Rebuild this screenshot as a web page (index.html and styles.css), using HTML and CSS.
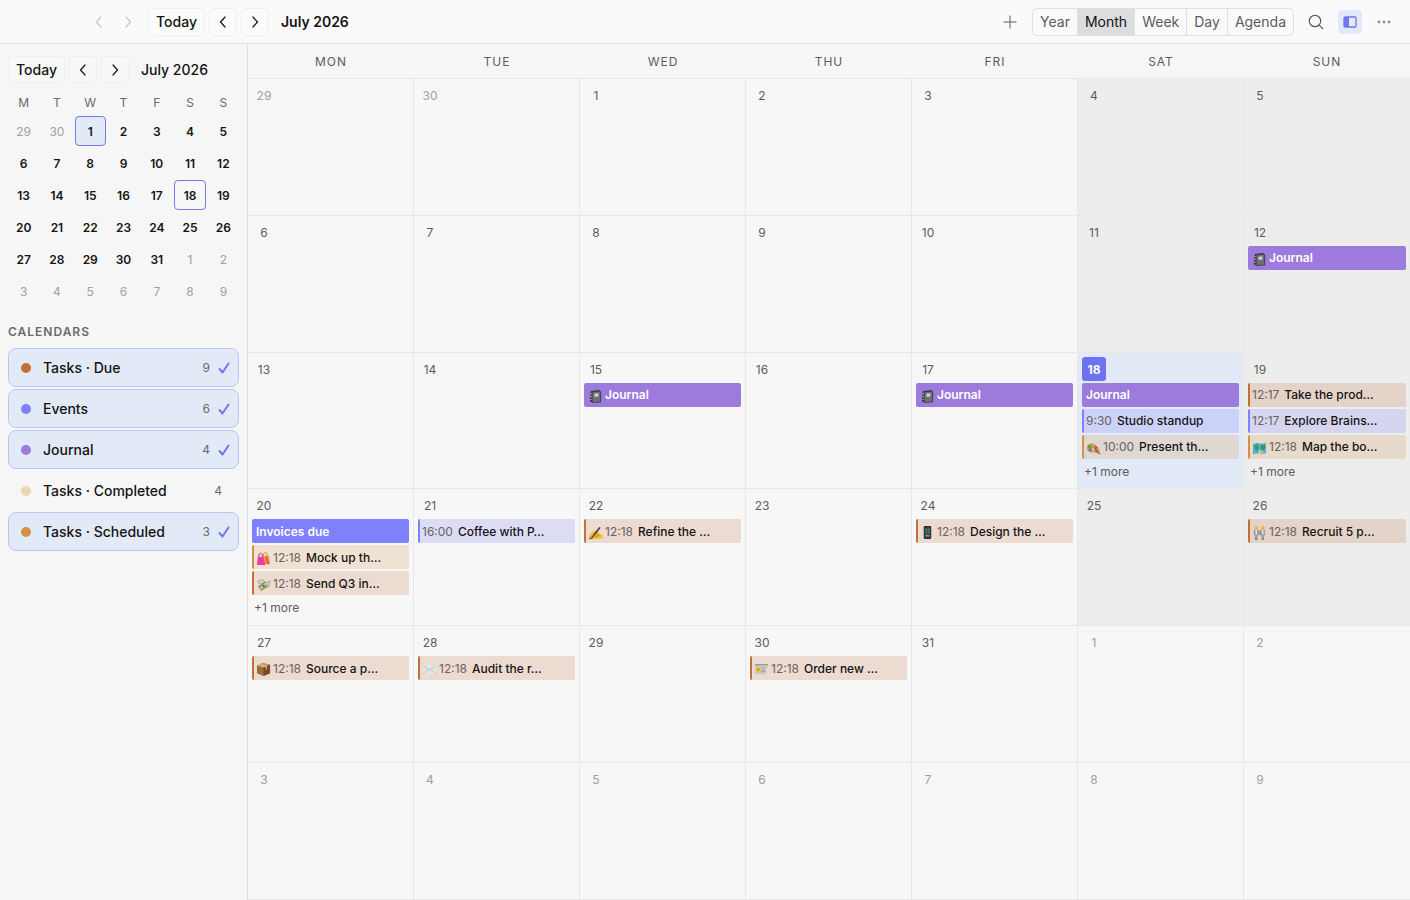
FILE: index.html
```html
<!DOCTYPE html>
<html lang="en">
<head>
    <meta charset="UTF-8">
    <meta name="viewport" content="width=device-width, initial-scale=1.0">
    <title>Calendar</title>
    <link rel="stylesheet" href="styles.css">
</head>
<body>

    <!-- Shared icons -->
    <svg class="sprite" aria-hidden="true">
        <symbol id="left" viewBox="0 0 16 16"><path d="M10 3L5.500 8l4.500 5" fill="none" stroke="currentColor" stroke-width="1.200" stroke-linecap="round" stroke-linejoin="round"/></symbol>
        <symbol id="right" viewBox="0 0 16 16"><path d="M6 3l4.500 5L6 13" fill="none" stroke="currentColor" stroke-width="1.200" stroke-linecap="round" stroke-linejoin="round"/></symbol>
        <symbol id="notebook" viewBox="0 0 16 16">
            <path d="M3 2l9-1 2 2v11l-9 1-3-2z" fill="#3c3c42"/><path d="M5 3.500l8-.8v10.600l-8 .8z" fill="#6e6e74"/><path d="M7 5l4-.5v3.500L7 8.500z" fill="#cfcfd2"/><path d="M2.500 5h2M2.500 8h2M2.500 11h2" stroke="#a9a9ad"/>
        </symbol>
        <symbol id="palette" viewBox="0 0 16 16">
            <path d="M1 7c0-4 5-6 9-3s6 8 3 9-3-2-6-1-6-1-6-5z" fill="#cf9450"/><circle cx="3.800" cy="6" r="1.700" fill="#3fa35a"/><circle cx="7.500" cy="4.800" r="1.500" fill="#8fc04a"/><circle cx="10.500" cy="7" r="1.500" fill="#d8433b"/><circle cx="4.300" cy="9.500" r="1.400" fill="#5a6fc0"/><circle cx="8" cy="9" r="1.200" fill="#f0e3c8"/><path d="M9 8l6 6" stroke="#7b5a3c" stroke-width="1.200"/>
        </symbol>
        <symbol id="map" viewBox="0 0 16 16">
            <path d="M1 3l5-1 4 1 5-1v11l-5 1-4-1-5 1z" fill="#4eb4d4"/><path d="M2 5l3-1 2 2-1 3-2 1-1-3zM9 5l5-1v4l-2 2-2-2z" fill="#4c8f55"/><path d="M7 10l4 0 1 3-2 1-3-1z" fill="#e5d889"/><path d="M6 2v11M10 3v11" stroke="#2b7795" stroke-width=".5"/>
        </symbol>
        <symbol id="bags" viewBox="0 0 16 16">
            <path d="M8 5V3q2-3 4 0v2" fill="none" stroke="#c98b2f"/><path d="M7 5h7l1 9H7z" fill="#f0a33c"/><path d="M3 6V4q2-3 4 0v2" fill="none" stroke="#b01f7c"/><path d="M2 6h6l2 9H1z" fill="#f03ca8"/><path d="M11 6l2 8" stroke="#e5486d" stroke-width="2"/>
        </symbol>
        <symbol id="money" viewBox="0 0 16 16">
            <path d="M2 4l5-1 4 3-2 2-6-1zM9 7l6-3-1 6-4 2z" fill="#cdd0c8" stroke="#8b9085" stroke-width=".6"/><path d="M2 10l7-5 4 4-7 6z" fill="#7f956a"/><path d="M4 11l6-5 2 2-6 5z" fill="#d8c682"/><circle cx="8" cy="9.500" r="1.500" fill="#697d53"/>
        </symbol>
        <symbol id="writing" viewBox="0 0 16 16">
            <path d="M1 12l3-4 4-2.500L10 6l2 1.500-1 1.500 4.500 1.500v3.500L8 15l-6-1z" fill="#f8ba2e"/><path d="M3 13.500L12 2l1.500 1L5.500 13z" fill="#3c3c40"/><path d="M6 11l4-1 2 1-4 2" fill="none" stroke="#c57e12" stroke-width=".9"/><path d="M1 14.500h4" stroke="#555"/>
        </symbol>
        <symbol id="phone" viewBox="0 0 16 16">
            <rect x="4" y="1" width="8" height="14" rx="1.300" fill="#25292b"/><rect x="5" y="2.500" width="6" height="11" fill="#39534f"/><path d="M6 4h1v1H6zM9 4h1v1H9zM6 7h1v1H6zM9 7h1v1H9zM6 11h4v1H6z" fill="#93aaa2"/>
        </symbol>
        <symbol id="people" viewBox="0 0 16 16">
            <circle cx="4.500" cy="3" r="2" fill="#f0b52e"/><circle cx="11.500" cy="3" r="2" fill="#f0b52e"/><path d="M2 5h5l1 2 1-2h5v6h-1l-.5 4h-2L10 11H6l-.5 4h-2L3 11H2z" fill="#9c9c9c"/><path d="M4.500 5v5M11.500 5v5" stroke="#f3efe9" stroke-width="1.400"/><path d="M3 15h3M10 15h3" stroke="#555"/>
        </symbol>
        <symbol id="package" viewBox="0 0 16 16">
            <path d="M1 4l6-3 8 2v9l-7 3-7-3z" fill="#9c6b3c"/><path d="M1 4l6-3 8 2-7 3z" fill="#cb9c68"/><path d="M8 6l7-3v9l-7 3z" fill="#75492a"/><path d="M4 3l7 2v3" fill="none" stroke="#e0bb85" stroke-width="1.300"/>
        </symbol>
        <symbol id="envelope" viewBox="0 0 16 16">
            <path d="M1 3h14v10H1z" fill="#e3e5e7"/><path d="M1 3l7 6 7-6M1 13l5-5M15 13l-5-5" fill="none" stroke="#b3b8bd" stroke-width=".8"/>
        </symbol>
        <symbol id="card" viewBox="0 0 16 16">
            <path d="M1 2h14v4l-2 1v6H1z" fill="#c8c8c8"/><path d="M1 2h14v1.500H1z" fill="#999"/><path d="M2 6h5v5H2z" fill="#efc13f"/><path d="M8 6h3v1H8zM8 9h4v1H8z" fill="#87878a"/><circle cx="4.500" cy="8" r="1" fill="#b98020"/>
        </symbol>
    </svg>

    <!-- Top bar -->
    <header class="topbar">
        <nav class="history">
            <button class="ghost faded" aria-label="Back"><svg><use href="#left"/></svg></button>
            <button class="ghost faded" aria-label="Forward"><svg><use href="#right"/></svg></button>
        </nav>
        <div class="period">
            <button class="btn">Today</button>
            <button class="btn arrow" aria-label="Previous month"><svg><use href="#left"/></svg></button>
            <button class="btn arrow" aria-label="Next month"><svg><use href="#right"/></svg></button>
            <h1>July 2026</h1>
        </div>
        <div class="tools">
            <button class="ghost" aria-label="New event"><svg viewBox="0 0 16 16"><path d="M8 1.500v13M1.500 8h13" stroke="currentColor"/></svg></button>
            <div class="views">
                <button>Year</button>
                <button class="active">Month</button>
                <button>Week</button>
                <button>Day</button>
                <button>Agenda</button>
            </div>
            <button class="ghost" aria-label="Search"><svg viewBox="0 0 16 16"><circle cx="7" cy="7" r="5.700" fill="none" stroke="currentColor" stroke-width="1.200"/><path d="M11.200 11.200L15 15" stroke="currentColor" stroke-width="1.200"/></svg></button>
            <button class="ghost on" aria-label="Toggle sidebar"><svg viewBox="0 0 16 16"><rect x="2" y="3" width="12" height="10" rx="1" fill="none" stroke="currentColor" stroke-width="1.300"/><path d="M2 3h5v10H2z" fill="currentColor"/></svg></button>
            <button class="ghost dots" aria-label="More"><svg viewBox="0 0 16 16"><g fill="currentColor"><circle cx="3" cy="8" r="1.400"/><circle cx="8" cy="8" r="1.400"/><circle cx="13" cy="8" r="1.400"/></g></svg></button>
        </div>
    </header>

    <div class="layout">

        <!-- Sidebar -->
        <aside class="sidebar">
            <div class="period small">
                <button class="btn">Today</button>
                <button class="btn arrow" aria-label="Previous month"><svg><use href="#left"/></svg></button>
                <button class="btn arrow" aria-label="Next month"><svg><use href="#right"/></svg></button>
                <h2>July 2026</h2>
            </div>

            <div class="mini mini-head">
                <span>M</span><span>T</span><span>W</span><span>T</span><span>F</span><span>S</span><span>S</span>
            </div>
            <div class="mini">
                <button class="out">29</button><button class="out">30</button><button class="selected">1</button><button>2</button><button>3</button><button>4</button><button>5</button>
                <button>6</button><button>7</button><button>8</button><button>9</button><button>10</button><button>11</button><button>12</button>
                <button>13</button><button>14</button><button>15</button><button>16</button><button>17</button><button class="now">18</button><button>19</button>
                <button>20</button><button>21</button><button>22</button><button>23</button><button>24</button><button>25</button><button>26</button>
                <button>27</button><button>28</button><button>29</button><button>30</button><button>31</button><button class="out">1</button><button class="out">2</button>
                <button class="out">3</button><button class="out">4</button><button class="out">5</button><button class="out">6</button><button class="out">7</button><button class="out">8</button><button class="out">9</button>
            </div>

            <h3>CALENDARS</h3>
            <div class="calendars">
                <label class="calendar checked"><span class="dot due"></span><span class="name">Tasks · Due</span><span class="count">9</span><input type="checkbox" checked></label>
                <label class="calendar checked"><span class="dot events"></span><span class="name">Events</span><span class="count">6</span><input type="checkbox" checked></label>
                <label class="calendar checked"><span class="dot journal"></span><span class="name">Journal</span><span class="count">4</span><input type="checkbox" checked></label>
                <label class="calendar"><span class="dot completed"></span><span class="name">Tasks · Completed</span><span class="count">4</span><input type="checkbox"></label>
                <label class="calendar checked"><span class="dot scheduled"></span><span class="name">Tasks · Scheduled</span><span class="count">3</span><input type="checkbox" checked></label>
            </div>
        </aside>

        <!-- Month grid -->
        <main class="month">
            <div class="weekdays">
                <span>MON</span><span>TUE</span><span>WED</span><span>THU</span><span>FRI</span><span>SAT</span><span>SUN</span>
            </div>
            <div class="days">
                <div class="day out"><span class="num">29</span></div>
                <div class="day out"><span class="num">30</span></div>
                <div class="day"><span class="num">1</span></div>
                <div class="day"><span class="num">2</span></div>
                <div class="day"><span class="num">3</span></div>
                <div class="day weekend"><span class="num">4</span></div>
                <div class="day weekend"><span class="num">5</span></div>

                <div class="day"><span class="num">6</span></div>
                <div class="day"><span class="num">7</span></div>
                <div class="day"><span class="num">8</span></div>
                <div class="day"><span class="num">9</span></div>
                <div class="day"><span class="num">10</span></div>
                <div class="day weekend"><span class="num">11</span></div>
                <div class="day weekend"><span class="num">12</span>
                    <button class="event solid journal"><svg><use href="#notebook"/></svg><b>Journal</b></button>
                </div>

                <div class="day"><span class="num">13</span></div>
                <div class="day"><span class="num">14</span></div>
                <div class="day"><span class="num">15</span>
                    <button class="event solid journal"><svg><use href="#notebook"/></svg><b>Journal</b></button>
                </div>
                <div class="day"><span class="num">16</span></div>
                <div class="day"><span class="num">17</span>
                    <button class="event solid journal"><svg><use href="#notebook"/></svg><b>Journal</b></button>
                </div>
                <div class="day today"><span class="num">18</span>
                    <button class="event solid journal"><b>Journal</b></button>
                    <button class="event tint-events"><time>9:30</time><b>Studio standup</b></button>
                    <button class="event tint-scheduled"><svg><use href="#palette"/></svg><time>10:00</time><b>Present th…</b></button>
                    <button class="more">+1 more</button>
                </div>
                <div class="day weekend"><span class="num">19</span>
                    <button class="event tint-due"><time>12:17</time><b>Take the prod…</b></button>
                    <button class="event tint-events"><time>12:17</time><b>Explore Brains…</b></button>
                    <button class="event tint-scheduled"><svg><use href="#map"/></svg><time>12:18</time><b>Map the bo…</b></button>
                    <button class="more">+1 more</button>
                </div>

                <div class="day"><span class="num">20</span>
                    <button class="event solid events"><b>Invoices due</b></button>
                    <button class="event tint-scheduled"><svg><use href="#bags"/></svg><time>12:18</time><b>Mock up th…</b></button>
                    <button class="event tint-due"><svg><use href="#money"/></svg><time>12:18</time><b>Send Q3 in…</b></button>
                    <button class="more">+1 more</button>
                </div>
                <div class="day"><span class="num">21</span>
                    <button class="event tint-events"><time>16:00</time><b>Coffee with P…</b></button>
                </div>
                <div class="day"><span class="num">22</span>
                    <button class="event tint-due"><svg><use href="#writing"/></svg><time>12:18</time><b>Refine the …</b></button>
                </div>
                <div class="day"><span class="num">23</span></div>
                <div class="day"><span class="num">24</span>
                    <button class="event tint-due"><svg><use href="#phone"/></svg><time>12:18</time><b>Design the …</b></button>
                </div>
                <div class="day weekend"><span class="num">25</span></div>
                <div class="day weekend"><span class="num">26</span>
                    <button class="event tint-due"><svg><use href="#people"/></svg><time>12:18</time><b>Recruit 5 p…</b></button>
                </div>

                <div class="day"><span class="num">27</span>
                    <button class="event tint-due"><svg><use href="#package"/></svg><time>12:18</time><b>Source a p…</b></button>
                </div>
                <div class="day"><span class="num">28</span>
                    <button class="event tint-due"><svg><use href="#envelope"/></svg><time>12:18</time><b>Audit the r…</b></button>
                </div>
                <div class="day"><span class="num">29</span></div>
                <div class="day"><span class="num">30</span>
                    <button class="event tint-due"><svg><use href="#card"/></svg><time>12:18</time><b>Order new …</b></button>
                </div>
                <div class="day"><span class="num">31</span></div>
                <div class="day out"><span class="num">1</span></div>
                <div class="day out"><span class="num">2</span></div>

                <div class="day out"><span class="num">3</span></div>
                <div class="day out"><span class="num">4</span></div>
                <div class="day out"><span class="num">5</span></div>
                <div class="day out"><span class="num">6</span></div>
                <div class="day out"><span class="num">7</span></div>
                <div class="day out"><span class="num">8</span></div>
                <div class="day out"><span class="num">9</span></div>
            </div>
        </main>

    </div>

</body>
</html>
```
FILE: styles.css
```css
* {
    margin: 0;
    padding: 0;
    box-sizing: border-box;
}

body {
    display: flex;
    flex-direction: column;
    min-height: 100vh;
    background: #f6f6f6;
    color: #141414;
    font-family: Inter, sans-serif;
    font-size: 14px;
}

button {
    border: none;
    background: none;
    color: inherit;
    font: inherit;
    cursor: pointer;
}

svg {
    display: block;
    width: 16px;
    height: 16px;
    flex-shrink: 0;
}

.sprite {
    display: none;
}

/* Top bar */
.topbar {
    display: flex;
    align-items: center;
    height: 44px;
    padding: 0 14px 0 86px;
    background: #fafafa;
    border-bottom: 1px solid #e0e0e0;
}

.history {
    display: flex;
    gap: 4px;
    margin-right: 8px;
}

.ghost {
    display: flex;
    align-items: center;
    justify-content: center;
    width: 24px;
    height: 24px;
    border-radius: 4px;
    color: #5c5c5c;
}

.ghost.faded {
    width: 25px;
    color: #c8c8c8;
}

.ghost.on {
    background: #e3e9f8;
    color: #7375ec;
}

.ghost.dots {
    color: #8f8f8f;
}

.period {
    display: flex;
    align-items: center;
    gap: 4px;
}

.btn {
    display: flex;
    align-items: center;
    justify-content: center;
    height: 28px;
    padding: 0 8px;
    border: 1px solid #efefef;
    border-radius: 5px;
    background: #fbfbfb;
    font-weight: 500;
}

.btn.arrow {
    width: 28px;
    padding: 0;
}

.period .btn:first-child {
    padding: 0 7px;
}

.period h1,
.period h2 {
    margin-left: 8px;
    font-size: 14px;
    font-weight: 600;
}

.period h2 {
    font-weight: 500;
}

.tools {
    display: flex;
    align-items: center;
    gap: 10px;
    margin-left: auto;
}

.views {
    display: flex;
    height: 28px;
    border: 1px solid #e0e0e0;
    border-radius: 5px;
    overflow: hidden;
}

.views button {
    padding: 0 7px;
    border-left: 1px solid #e0e0e0;
    color: #5c5c5c;
}

.views button:first-child {
    border-left: none;
}

.views .active {
    background: #dcdde0;
    color: #111;
}

/* Sidebar */
.layout {
    display: flex;
    flex: 1;
}

.sidebar {
    flex: 0 0 248px;
    padding: 12px 8px;
    border-right: 1px solid #e0e0e0;
}

.period.small .btn {
    height: 27px;
    background: #f8f8f8;
}

.mini {
    display: grid;
    grid-template-columns: repeat(7, 1fr);
    gap: 2px;
    font-size: 12px;
    text-align: center;
}

.mini-head {
    margin: 12px 0 5px;
    line-height: 16px;
    color: #6a6a6a;
}

.mini button {
    height: 30px;
    border: 1px solid transparent;
    border-radius: 4px;
    font-weight: 600;
}

.mini .out {
    color: #a0a0a0;
    font-weight: 400;
}

.mini .now,
.mini .selected {
    border-color: #7a78e0;
}

.mini .selected {
    background: #e2e9f7;
}

.sidebar h3 {
    margin: 18px 0 8px;
    color: #6a6a6a;
    font-size: 12px;
    font-weight: 600;
    line-height: 16px;
    letter-spacing: 1px;
}

.calendars {
    display: grid;
    gap: 2px;
}

.calendar {
    display: flex;
    align-items: center;
    height: 39px;
    padding: 0 8px 0 12px;
    border: 1px solid transparent;
    border-radius: 8px;
    cursor: pointer;
}

.calendar.checked {
    background: #e2e9f7;
    border-color: #c0c4f4;
}

.dot {
    width: 10px;
    height: 10px;
    margin-right: 12px;
    border-radius: 50%;
}

.name {
    flex: 1;
    font-weight: 500;
}

.count {
    margin-right: 8px;
    color: #6a6a6a;
    font-size: 12px;
}

.calendar input {
    appearance: none;
    width: 0;
    height: 12px;
}

.calendar input:checked {
    width: 12px;
    background: url("data:image/svg+xml,%3Csvg xmlns='http://www.w3.org/2000/svg' viewBox='0 0 12 12'%3E%3Cpath d='M1.500 7l3 3.500L10.500 1.500' fill='none' stroke='%237375ec' stroke-width='2' stroke-linecap='round' stroke-linejoin='round'/%3E%3C/svg%3E") center / contain no-repeat;
}

/* Calendar colors */
.due { background: #c46e38; }
.events { background: #7f80fb; }
.journal { background: #9d7bdc; }
.completed { background: #ead5b8; }
.scheduled { background: #d4923f; }

/* Month grid */
.month {
    display: flex;
    flex: 1;
    flex-direction: column;
    min-width: 0;
}

.weekdays {
    display: grid;
    grid-template-columns: repeat(7, 1fr);
    height: 35px;
    border-bottom: 1px solid #e8e8e8;
    color: #5c5c5c;
    font-size: 12px;
    line-height: 35px;
    letter-spacing: 1px;
    text-align: center;
}

.days {
    display: grid;
    flex: 1;
    grid-template-columns: repeat(7, minmax(0, 1fr));
    grid-template-rows: repeat(6, 1fr);
}

.day {
    display: flex;
    flex-direction: column;
    gap: 2px;
    padding: 4px;
    border-right: 1px solid #e8e8e8;
    border-bottom: 1px solid #e8e8e8;
    background: #f7f7f7;
}

.day:nth-child(7n) {
    border-right: none;
}

.day.weekend {
    background: #ededed;
}

.day.today {
    background: #e2e9f7;
}

.num {
    width: 24px;
    height: 24px;
    border-radius: 3px;
    color: #5c5c5c;
    font-size: 12px;
    line-height: 25px;
    text-align: center;
}

.day.out .num {
    color: #a0a0a0;
}

.today .num {
    background: #6b74ee;
    color: #fff;
    font-weight: 700;
}

.event {
    display: flex;
    align-items: center;
    height: 24px;
    padding: 0 2px;
    border-left: 2px solid transparent;
    border-radius: 2px;
    font-size: 12px;
    white-space: nowrap;
    overflow: hidden;
}

.event b {
    font-weight: 500;
}

.event svg {
    width: 15px;
    height: 15px;
    margin: 3px 2px 0 0;
}

.event time {
    margin-right: 5px;
    color: #6a6260;
}

.event.solid {
    padding-left: 4px;
    border-left: none;
    color: #fff;
}

.event.solid b {
    font-weight: 600;
}

.tint-due {
    border-left-color: #c46e38;
    background: rgba(196, 110, 56, 0.2);
}

.tint-events {
    border-left-color: #7f80fb;
    background: rgba(127, 128, 251, 0.22);
}

.tint-scheduled {
    border-left-color: #d4923f;
    background: rgba(212, 146, 63, 0.2);
}

.more {
    align-self: flex-start;
    padding: 0 2px;
    color: #5c5c5c;
    font-size: 12px;
    line-height: 22px;
}
```
